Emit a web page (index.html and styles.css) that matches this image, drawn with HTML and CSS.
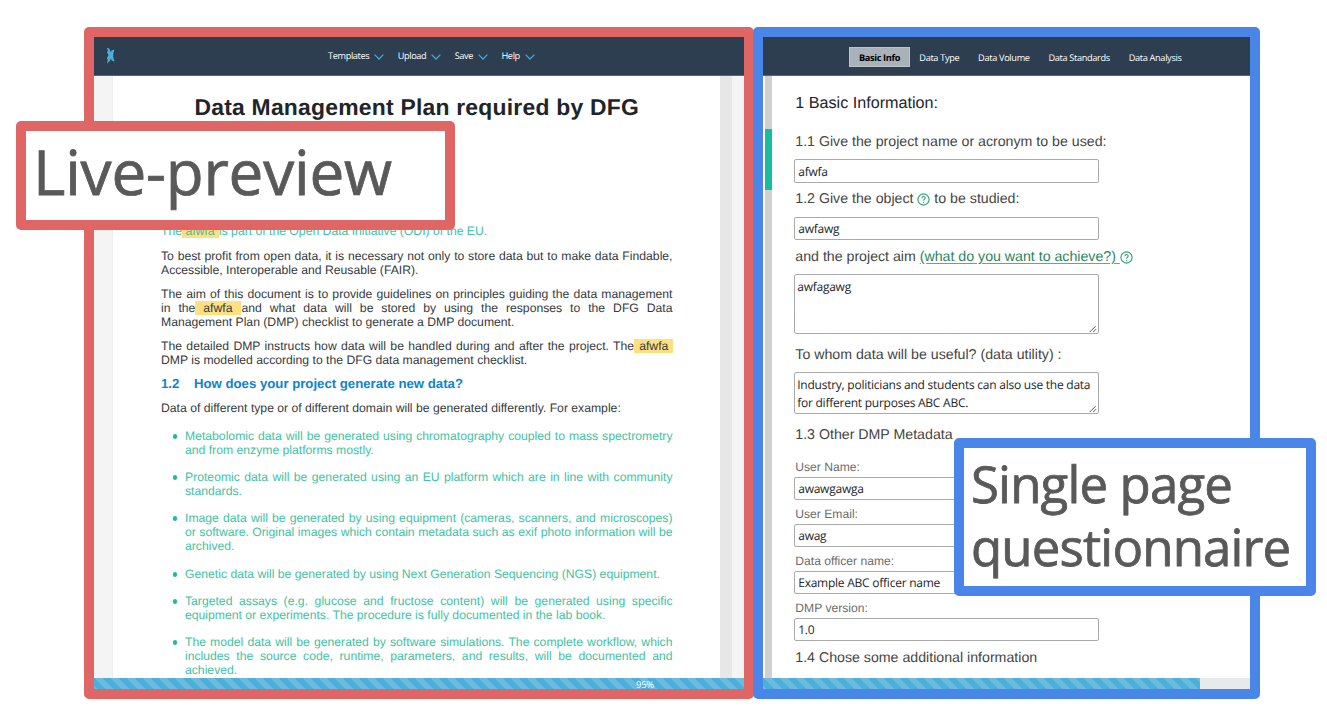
FILE: index.html
```html
<!DOCTYPE html>
<html lang="en">
<head>
<meta charset="utf-8">
<title>Data Management Plan</title>
<link rel="stylesheet" href="styles.css">
</head>
<body>
<main class="stage">
  <section class="panel panel-preview">
    <nav class="navbar menu">
      <svg class="logo" width="9" height="17" viewBox="0 0 9 17"><path d="M.8 .8 L3.2 1.4 L5 5.4 L5.4 3.6 L8.4 2.4 L7.4 6 L7.2 10 L8.6 14.5 L5.8 13.4 L4.8 11.6 L3.8 14 L1 16.4 L1.8 12.5 L.8 11.4 L2.6 8 L1 5.6 L2 3.6 Z" fill="#4bb0d8"/></svg>
      <a class="menu-item">Templates<svg class="chev" viewBox="0 0 10 6"><path d="M.6 .6 L5 5 L9.4 .6"/></svg></a>
      <a class="menu-item">Upload<svg class="chev" viewBox="0 0 10 6"><path d="M.6 .6 L5 5 L9.4 .6"/></svg></a>
      <a class="menu-item">Save<svg class="chev" viewBox="0 0 10 6"><path d="M.6 .6 L5 5 L9.4 .6"/></svg></a>
      <a class="menu-item">Help<svg class="chev" viewBox="0 0 10 6"><path d="M.6 .6 L5 5 L9.4 .6"/></svg></a>
    </nav>
    <div class="viewer">
      <article class="doc">
        <h1 class="doc-title">Data Management Plan required by DFG</h1>
        <p class="para green"><span class="line">The<mark> afwfa </mark>is part of the Open Data Initiative (ODI) of the EU.</span></p>
        <p class="para"><span class="line full">To best profit from open data, it is necessary not only to store data but to make data Findable,</span><span class="line">Accessible, Interoperable and Reusable (FAIR).</span></p>
        <p class="para"><span class="line full">The aim of this document is to provide guidelines on principles guiding the data management</span><span class="line full">in the<mark> afwfa </mark>and what data will be stored by using the responses to the DFG Data</span><span class="line">Management Plan (DMP) checklist to generate a DMP document.</span></p>
        <p class="para"><span class="line full">The detailed DMP instructs how data will be handled during and after the project. The<mark class="wide"> afwfa&nbsp;</mark></span><span class="line">DMP is modelled according to the DFG data management checklist.</span></p>
        <h2 class="doc-heading"><span class="num">1.2</span>How does your project generate new data?</h2>
        <p class="para">Data of different type or of different domain will be generated differently. For example:</p>
        <ul class="list">
          <li><span class="line full">Metabolomic data will be generated using chromatography coupled to mass spectrometry</span><span class="line">and from enzyme platforms mostly.</span></li>
          <li><span class="line full">Proteomic data will be generated using an EU platform which are in line with community</span><span class="line">standards.</span></li>
          <li><span class="line full">Image data will be generated by using equipment (cameras, scanners, and microscopes)</span><span class="line full">or software. Original images which contain metadata such as exif photo information will be</span><span class="line">archived.</span></li>
          <li><span class="line">Genetic data will be generated by using Next Generation Sequencing (NGS) equipment.</span></li>
          <li><span class="line full">Targeted assays (e.g. glucose and fructose content) will be generated using specific</span><span class="line">equipment or experiments. The procedure is fully documented in the lab book.</span></li>
          <li><span class="line full">The model data will be generated by software simulations. The complete workflow, which</span><span class="line full">includes the source code, runtime, parameters, and results, will be documented and</span><span class="line">achieved.</span></li>
        </ul>
      </article>
      <div class="doc-scroll"></div>
    </div>
    <div class="progress"><div class="bar bar-full">95%</div></div>
  </section>

  <section class="panel panel-form">
    <nav class="navbar tabs">
      <a class="tab active">Basic Info</a>
      <a class="tab">Data Type</a>
      <a class="tab">Data Volume</a>
      <a class="tab">Data Standards</a>
      <a class="tab">Data Analysis</a>
    </nav>
    <div class="form-area">
      <div class="form-scroll"><div class="thumb"></div></div>
      <form class="form">
        <div class="form-title">1 Basic Information:</div>
        <div class="label l1">1.1 Give the project name or acronym to be used:</div>
        <div class="field tall">afwfa</div>
        <div class="label l2">1.2 Give the object&nbsp;<svg class="help" viewBox="0 0 13 13"><circle cx="6.5" cy="6.5" r="5.6"/><path d="M4.9 5.2 C4.9 3 8.2 3 8.2 5 C8.2 6.3 6.6 6.3 6.6 7.7 M6.6 8.9 V9.9"/></svg>&nbsp;to be studied:</div>
        <div class="field">awfawg</div>
        <div class="label l3">and the project aim&nbsp;<a class="hint">(what do you want to achieve?)&nbsp;</a><svg class="help" viewBox="0 0 13 13"><circle cx="6.5" cy="6.5" r="5.6"/><path d="M4.9 5.2 C4.9 3 8.2 3 8.2 5 C8.2 6.3 6.6 6.3 6.6 7.7 M6.6 8.9 V9.9"/></svg></div>
        <div class="field area big"><span>awfagawg</span><svg class="grip" viewBox="0 0 8 8"><path d="M.8 7 L6.5 1.3 M4.2 7 L7 4.2"/></svg></div>
        <div class="label l4">To whom data will be useful? (data utility) :</div>
        <div class="field area small"><span>Industry, politicians and students can also use the data<br>for different purposes ABC ABC.</span><svg class="grip" viewBox="0 0 8 8"><path d="M.8 7 L6.5 1.3 M4.2 7 L7 4.2"/></svg></div>
        <div class="label l5">1.3 Other DMP Metadata</div>
        <div class="sublabel first">User Name:</div>
        <div class="field">awawgawga</div>
        <div class="sublabel">User Email:</div>
        <div class="field">awag</div>
        <div class="sublabel">Data officer name:</div>
        <div class="field">Example ABC officer name</div>
        <div class="sublabel">DMP version:</div>
        <div class="field">1.0</div>
        <div class="label l6">1.4 Chose some additional information</div>
      </form>
    </div>
    <div class="progress"><div class="bar bar-form"></div></div>
  </section>

  <div class="callout callout-preview">Live-preview</div>
  <div class="callout callout-form">Single page<br>questionnaire</div>
</main>
</body>
</html>
```

FILE: styles.css
```css
* { box-sizing: border-box; }
body { margin: 0; background: #fff; text-rendering: geometricPrecision; font-family: "Liberation Sans", Arial, sans-serif; }
.stage { position: relative; display: flex; align-items: flex-start; width: 1327px; height: 707px; padding: 27px 0 0 84px; overflow: hidden; }

.panel { display: flex; flex-direction: column; height: 672px; border: 10px solid; border-radius: 5px; flex: none; background: #fff; }
.panel-preview { width: 670px; border-color: #e06666; }
.panel-form { width: 507px; margin-left: -1px; border-color: #4a86e8; }

.navbar { display: flex; align-items: center; height: 39px; flex: none; background: #2c3e50; border-bottom: 1px solid #56657a; font-family: "Open Sans", sans-serif; font-size: 9.2px; letter-spacing: -.36px; color: #fff; }
.menu { padding-left: 12px; padding-bottom: 1px; }
.logo { margin-right: 213px; margin-top: -1px; }
.menu-item { display: flex; align-items: center; margin-right: 13.3px; white-space: nowrap; }
.chev { width: 10px; height: 6px; margin-left: 5px; margin-top: 3px; fill: none; stroke: #45a9d4; stroke-width: 1.3; }
.tabs { padding-left: 86px; padding-top: 2px; font-size: 9.2px; letter-spacing: -.33px; }
.tab { margin-right: 18.8px; white-space: nowrap; }
.tab.active { width: 61px; height: 20px; margin-right: 9.3px; border: 1px solid #bcc3c9; background: #a9b1b9; color: #000; font-weight: 700; line-height: 19px; text-align: center; }

.viewer { display: flex; flex: 1; min-height: 0; overflow: hidden; padding-left: 19px; padding-right: 12px; background: #f4f4f4; }
.doc { flex: 1; min-width: 0; padding: 16.5px 47.5px 0 48px; background: #fff; font-size: 12.2px; line-height: 14px; color: #343a40; box-shadow: 0 0 1px #ccc; }
.doc-scroll { width: 12px; background: #e7e7e7; }
.doc-title { margin: 0 0 103.2px; font-size: 22.9px; line-height: 28px; letter-spacing: .23px; text-align: center; color: #212529; white-space: nowrap; }
.para { margin: 0 0 10px; white-space: nowrap; }
.green { margin-bottom: 11px; }
.line { display: block; white-space: nowrap; }
.full { white-space: normal; text-align: justify; text-align-last: justify; }
.green { color: #41c2a3; }
mark { background: #ffdf80; color: inherit; padding-right: 1px; }
mark.wide { padding: 0 .8px; }
.doc-heading { display: flex; margin: 0 0 10.3px; font-size: 13.19px; line-height: 14px; color: #0c84cc; white-space: nowrap; }
.num { width: 33px; }
.list { list-style: none; margin: 14px 0 0; padding: 0 0 0 24px; color: #41c2a3; }
.list li { position: relative; margin-bottom: 13.25px; }
.list li::before { content: ""; position: absolute; left: -12.5px; top: 5px; width: 4.8px; height: 4.8px; border-radius: 50%; background: #1abc9c; }

.progress { height: 11px; flex: none; background: #e6eaed; }
.bar { height: 11px; background: linear-gradient(45deg, #6bbbdf 25%, #4aafd9 25%, #4aafd9 50%, #6bbbdf 50%, #6bbbdf 75%, #4aafd9 75%) 0 0 / 16px 16px; font: 9.5px/13px "Open Sans", sans-serif; color: #fff; }
.bar-full { padding-left: 542px; letter-spacing: -.3px; }
.bar-form { width: 437px; }

.form-area { display: flex; flex: 1; min-height: 0; overflow: hidden; padding-left: 2px; }
.form-scroll { width: 7px; flex: none; padding-top: 53px; background: #d0d0d0; }
.thumb { height: 61px; background: #1abc9c; }
.form { width: 350px; margin: 0; padding: 16px 0 0 23.3px; color: #495057; }
.form-title { height: 23px; margin-bottom: 8px; font-size: 16.15px; line-height: 23px; color: #212529; }
.label { display: flex; align-items: center; font-size: 14.18px; white-space: nowrap; color: #444; padding-top: 1px; }
.l1 { height: 36px; }
.l2 { height: 31px; margin-bottom: 3px; }
.l3 { height: 32px; margin-bottom: 2px; padding-top: 2px; }
.l4 { height: 38px; padding-top: 3px; }
.l5 { height: 41px; }
.l6 { height: 32px; padding-top: 2px; }
.help { width: 13px; height: 13px; flex: none; margin-top: 1px; fill: none; stroke: #2f9e6e; stroke-width: 1.1; }
.hint { color: #2b8463; text-decoration: underline; text-decoration-color: #45a9d4; text-underline-offset: 2px; }
.field { display: flex; align-items: center; width: 305px; height: 23px; margin-left: -1.1px; padding: 1px 3px 0; border: 1px solid #aaa; border-radius: 2px; font: 12px/18px "Open Sans", sans-serif; letter-spacing: -.24px; color: #212529; white-space: nowrap; }
.field.tall { height: 24px; }
.area { justify-content: space-between; align-items: flex-start; padding: 3px 1px 0 2px; }
.area.big { height: 60px; }
.area.small { height: 42px; }
.grip { width: 8px; height: 8px; flex: none; align-self: flex-end; fill: none; stroke: #555; stroke-width: 1; }
.area span { width: 292px; }
.sublabel { height: 24px; padding-top: 7px; font-size: 12.14px; line-height: 15px; color: #6c6c6c; }
.sublabel.first { height: 22px; padding-top: 5px; }

.callout { position: absolute; border: 10px solid; border-radius: 5px; background: #fff; font-family: "Open Sans", sans-serif; color: #595959; -webkit-text-stroke: .8px #595959; white-space: nowrap; }
.callout-preview { left: 16px; top: 121px; width: 439px; height: 109px; padding-left: 7px; border-color: #e06666; font-size: 62px; line-height: 82px; letter-spacing: -.2px; }
.callout-form { left: 954px; top: 438px; width: 362px; height: 158px; padding: 4px 0 0 7px; border-color: #4a86e8; font-size: 51px; line-height: 62.5px; letter-spacing: -.85px; }
```
